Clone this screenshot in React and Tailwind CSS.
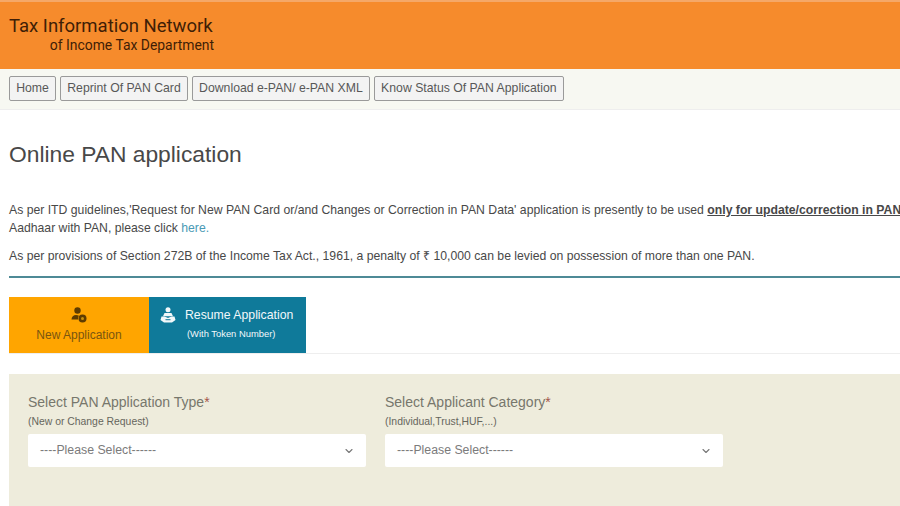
import { ChevronDown } from 'lucide-react';

const navLinks = ['Home', 'Reprint Of PAN Card', 'Download e-PAN/ e-PAN XML', 'Know Status Of PAN Application'];

function NewAppIcon() {
  return (
    <svg viewBox="0 0 16 16" className="w-4 h-4" fill="#5f3c00">
      <circle cx="6.5" cy="3.500" r="3.200" />
      <path d="M0.500 12.500c0-2.500 2-4.500 4.500-4.500 1.200 0 2.200.3 3 .8-.8 1-1.200 2.300-.9 3.700z" />
      <circle cx="11.500" cy="11.500" r="4" />
      <circle cx="11.500" cy="11.500" r="1.500" fill="#c8920c" />
    </svg>
  );
}

function ResumeIcon() {
  return (
    <svg viewBox="0 0 16 16" className="w-4 h-4 shrink-0" fill="#f2f8fa">
      <circle cx="8" cy="2.800" r="2.500" />
      <path d="M4.500 6h7l1.500 3.200H3z" />
      <path d="M1.500 9.500c2.500-.3 5 .3 6.500 1.500 1.500-1.200 4-1.800 6.500-1.500l1 3.500-3.500 2.500H4L.5 13z" />
      <path d="M5.500 12.200h5v1h-5z" fill="#0f7a9a" />
    </svg>
  );
}

function SelectField({ label, hint, className }) {
  return (
    <div className={className}>
      <div className="text-[14px] leading-[18px] text-[#77776c]">
        {label}<span className="text-[#a5554a]">*</span>
      </div>
      <div className="mt-[4px] text-[10.400px] leading-[14px] text-[#66665c]">{hint}</div>
      <div className="mt-[5px] h-[33px] bg-white rounded-[2px] flex items-center justify-between pl-[12px] pr-[11px] text-[12.300px] text-[#7b7b7b]">
        <span>----Please Select------</span>
        <ChevronDown className="w-[12px] h-[12px] text-[#777]" strokeWidth={2.2} />
      </div>
    </div>
  );
}

export default function App() {
  return (
    <div className="w-[900px] h-[506px] overflow-hidden bg-white font-['Liberation_Sans',Arial,sans-serif]">
      {/* Orange header */}
      <header className="h-[69px] bg-[#f68b2c] border-t-2 border-[#f5a868] pl-[9px] pt-[13px]">
        <div className="w-[205px] text-[#3f1e06] font-['Roboto',sans-serif]">
          <div className="text-[18.500px] leading-[22px] whitespace-nowrap">Tax Information Network</div>
          <div className="text-[13.900px] leading-[16px] text-right whitespace-nowrap">of Income Tax Department</div>
        </div>
      </header>

      {/* Nav */}
      <nav className="h-[41px] bg-[#f7f8f2] border-b border-[#eeeeee] pl-[9px] pt-[7px] flex items-start gap-[4px]">
        {navLinks.map((link) => (
          <button
            key={link}
            className="h-[25px] px-[6.200px] text-[12.250px] text-[#585858] bg-[#f3f3f3] border border-[#9a9a9a] rounded-[2px] whitespace-nowrap"
          >
            {link}
          </button>
        ))}
      </nav>

      <main className="pt-[31px]">
        <h1 className="pl-[9px] text-[22.800px] leading-[26px] text-[#484848]">Online PAN application</h1>

        {/* Notice text */}
        <div className="mt-[34px] px-[9px] text-[12.220px] leading-[18px] text-[#484848] whitespace-nowrap">
          <p>
            As per ITD guidelines,'Request for New PAN Card or/and Changes or Correction in PAN Data' application is presently to be used{' '}
            <b className="underline">only for update/correction in PAN</b>
          </p>
          <p>
            Aadhaar with PAN, please click <span className="text-[#4a9ab5]">here.</span>
          </p>
          <p className="mt-[10px]">
            As per provisions of Section 272B of the Income Tax Act., 1961, a penalty of ₹ 10,000 can be levied on possession of more than one PAN.
          </p>
        </div>
        <div className="ml-[9px] mt-[11px] h-[2px] bg-[#4e8a96]" />

        {/* Tabs */}
        <div className="mt-[19px] ml-[9px] h-[57px] flex border-b border-[#eeeeee]">
          <div className="w-[140px] bg-[#ffa500] flex flex-col items-center pt-[10px] text-[#7a5510]">
            <NewAppIcon />
            <span className="mt-[4px] text-[12px] leading-[16px]">New Application</span>
          </div>
          <div className="w-[157px] bg-[#0f7a9a] flex items-start pl-[11px] pt-[10px] gap-[9px] text-[#f2f8fa]">
            <ResumeIcon />
            <div className="flex flex-col items-start">
              <span className="text-[12.250px] leading-[16px] whitespace-nowrap">Resume Application</span>
              <span className="mt-[5px] ml-[2px] text-[9.400px] leading-[12px] whitespace-nowrap">(With Token Number)</span>
            </div>
          </div>
        </div>

        {/* Form panel */}
        <section className="mt-[20px] ml-[9px] h-[132px] bg-[#eeecdc] pl-[19px] pt-[19px] flex gap-[19px]">
          <SelectField label="Select PAN Application Type" hint="(New or Change Request)" className="w-[338px]" />
          <SelectField label="Select Applicant Category" hint="(Individual,Trust,HUF,...)" className="w-[338px]" />
        </section>
      </main>
    </div>
  );
}
